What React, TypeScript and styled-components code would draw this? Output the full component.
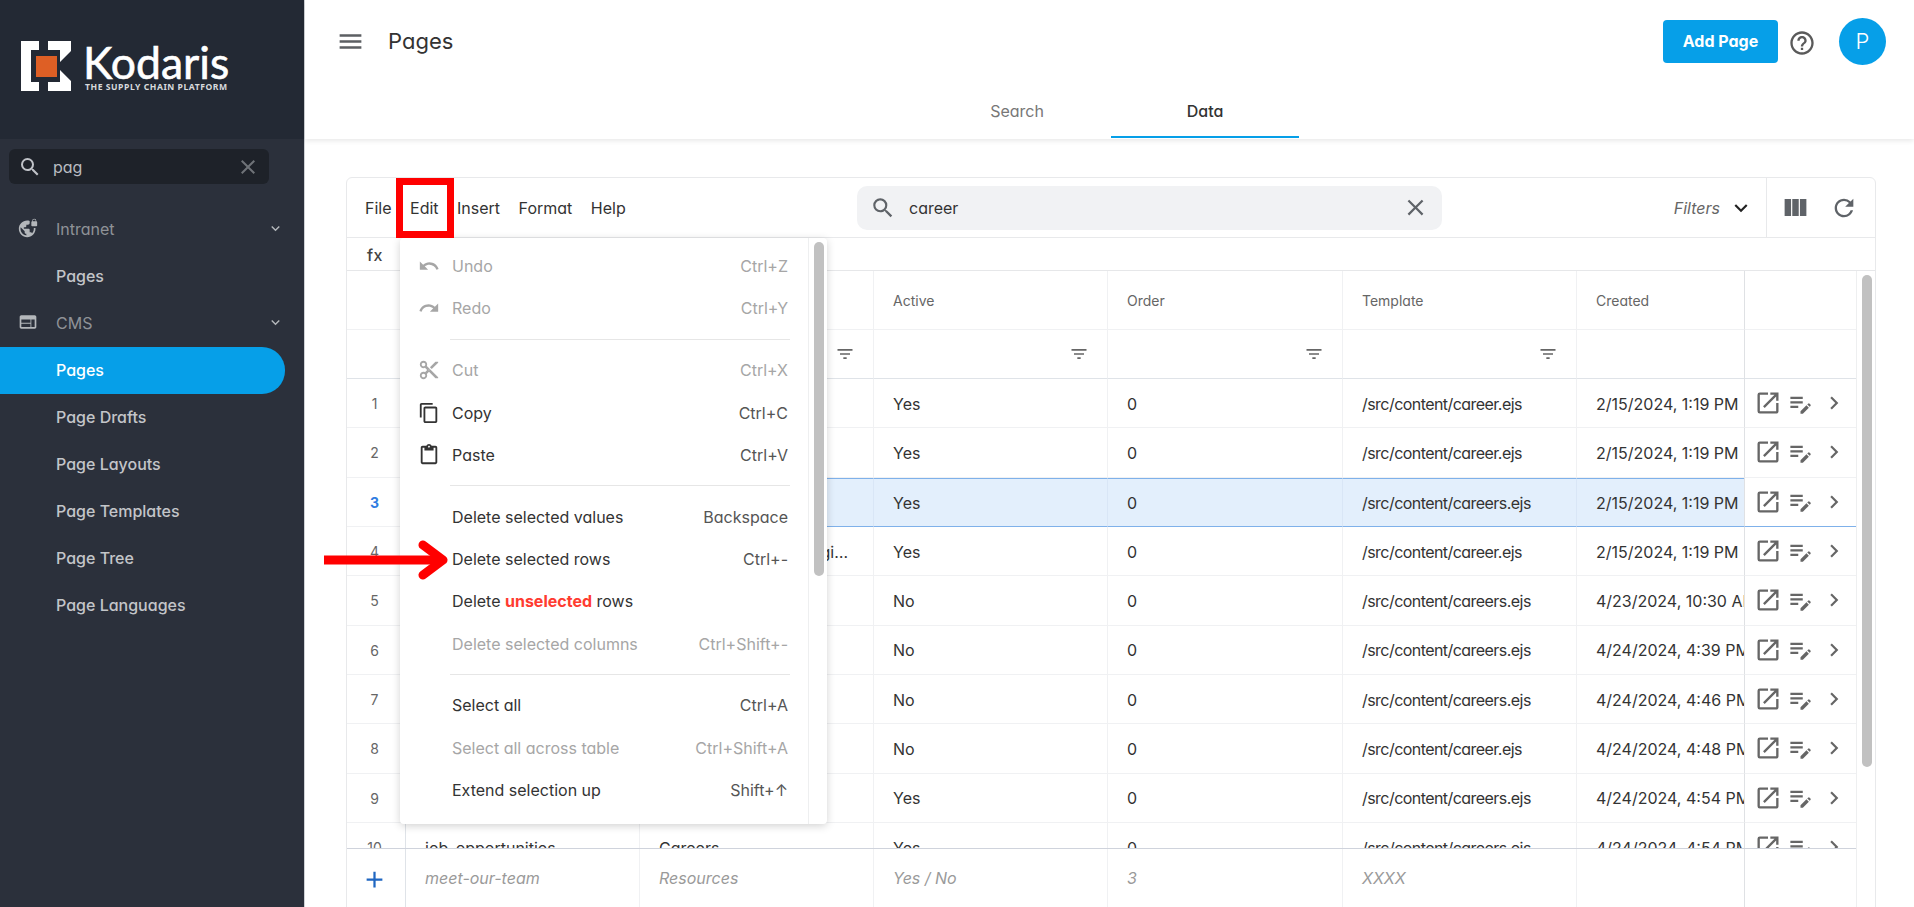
import React from "react";
import styled, { createGlobalStyle } from "styled-components";
import {
  MdSearch, MdClose, MdVpnLock, MdWeb, MdExpandMore, MdMenu, MdHelpOutline, MdViewColumn, MdRefresh,
  MdFilterList, MdOutlineOpenInNew, MdEditNote, MdChevronRight, MdAdd, MdUndo, MdRedo, MdContentCut,
  MdContentCopy, MdContentPaste,
} from "react-icons/md";

const Global = createGlobalStyle`
  html, body { margin: 0; padding: 0; height: 907px; overflow: hidden; background: #fff; }
  body { font-family: Inter, "Noto Sans", sans-serif; font-feature-settings: "cv11" 1; color: #333; }
  * { box-sizing: border-box; }
  #root { height: 907px; }
`;

const Shell = styled.div`display: flex; height: 907px; width: 1914px; overflow: hidden;`;
const Sidebar = styled.aside`
  width: 305px; flex: none; background: #2b303b; border-right: 1px solid #cfd2d6; height: 100%;
`;
const LogoBar = styled.div`
  height: 139px; background: #232934; padding: 41px 0 0 21px; display: flex; gap: 14px;
`;
const LogoWords = styled.div`display: flex; flex-direction: column; color: #fff; margin-top: 2px;`;
const LogoName = styled.span`
  font: 400 44.5px/38px Lato, sans-serif; font-feature-settings: normal; margin-left: -2px;
  -webkit-text-stroke: 0.6px #fff;
`;
const LogoTag = styled.span`
  font: 700 8.6px/11px "Noto Sans", sans-serif; letter-spacing: 0.55px; color: #d8dadd; white-space: nowrap;
  margin-top: 1px; font-feature-settings: normal;
`;
const SideSearch = styled.div`
  margin: 10px 35px 22px 9px; height: 35px; border-radius: 6px; background: #1e2229; display: flex;
  align-items: center; padding: 0 9px; color: #c0c3c8; gap: 11px; font-size: 16px;
`;
const SideSearchText = styled.span`flex: 1; color: #b9bcc1;`;
const SideClear = styled.span`display: flex; color: #6f7378;`;
const SideItem = styled.div<{ $active?: boolean; $group?: boolean }>`
  height: 47px; margin-right: 19px; display: flex; align-items: center; padding: 0 0 2px 56px; font-size: 16px;
  font-weight: ${(p) => (p.$group ? 400 : 500)};
  color: ${(p) => (p.$active ? "#fff" : p.$group ? "#8f9297" : "#c3c5c9")};
  background: ${(p) => (p.$active ? "#069fe8" : "transparent")};
  border-radius: ${(p) => (p.$active ? "0 23px 23px 0" : "0")};
  position: relative;
`;
const GroupIcon = styled.span`position: absolute; left: 18px; top: 12px; display: flex; color: #b4b7bb;`;
const GroupCaret = styled.span`position: absolute; right: 1px; top: 14px; display: flex; color: #b4b7bb;`;

const Main = styled.main`flex: 1; min-width: 0; display: flex; flex-direction: column;`;
const TopBar = styled.header`
  height: 139px; flex: none; background: #fff; box-shadow: 0 2px 5px rgba(0,0,0,.09); position: relative; z-index: 1;
`;
const TopRow = styled.div`height: 82px; display: flex; align-items: center; padding: 0 28px 0 31px;`;
const Burger = styled.span`display: flex; color: #5c5f63; margin-right: 23px;`;
const Title = styled.h1`flex: 1; margin: 0; font-size: 22px; font-weight: 400; color: #333;`;
const AddButton = styled.button`
  width: 115px; height: 43px; border: 0; border-radius: 4px; background: #069fe8; color: #fff; font: inherit;
  font-size: 16px; font-weight: 700; font-feature-settings: "cv11" 1;
`;
const HelpSlot = styled.span`width: 47px; display: flex; justify-content: center; margin: 4px 14px 0 0; color: #5a5a5a;`;
const Avatar = styled.span`
  width: 47px; height: 47px; border-radius: 50%; background: #069fe8; color: #fff; display: flex;
  align-items: center; justify-content: center; font-size: 22px; font-weight: 300;
`;
const TabRow = styled.nav`display: flex; justify-content: center; padding-left: 3px;`;
const Tab = styled.div<{ $on?: boolean }>`
  width: 188px; height: 56px; padding-top: 4px; display: flex; align-items: center; justify-content: center;
  font-size: 16px; font-weight: ${(p) => (p.$on ? 500 : 400)}; color: ${(p) => (p.$on ? "#333" : "#777")};
  border-bottom: 2px solid ${(p) => (p.$on ? "#069fe8" : "transparent")};
`;

const Content = styled.section`flex: 1; min-height: 0; padding: 38px 38px 0 41px; background: #fff;`;
const Card = styled.div`
  position: relative; height: 760px; border: 1px solid #e8e9eb; border-radius: 6px 6px 0 0; background: #fff;
`;
const Toolbar = styled.div`
  height: 60px; display: grid; grid-template-columns: 510px 585px 1fr 108px; align-items: center;
  border-bottom: 1px solid #e8e9eb;
`;
const MenuBar = styled.div`display: flex; gap: 18.5px; padding-left: 18px; font-size: 16px; color: #333;`;
const TableSearch = styled.div`
  height: 44px; border-radius: 10px; background: #f1f2f4; display: flex; align-items: center; padding: 0 13px;
  gap: 13px; color: #5f6368;
`;
const TableSearchText = styled.span`flex: 1; font-size: 16px; color: #333;`;
const Filters = styled.div`
  height: 100%; display: flex; align-items: center; justify-content: flex-end; gap: 8px; padding-right: 12px;
  border-right: 1px solid #e8e9eb; font-size: 16px; font-style: italic; color: #666;
`;
const FilterCaret = styled.span`display: flex; color: #222;`;
const ToolIcons = styled.div`display: flex; align-items: center; padding-left: 14px; gap: 20px; color: #5f6368;`;
const FxRow = styled.div`
  height: 33px; display: flex; align-items: center; padding: 1px 0 0 20px; border-bottom: 1px solid #e6e7e9;
  font-size: 16px; font-weight: 500; color: #444; letter-spacing: .5px;
`;
const TableWrap = styled.div`display: flex; height: 636px;`;
const Table = styled.div`width: 1509px; flex: none; display: flex; flex-direction: column;`;
const Row = styled.div<{ $h: string }>`
  height: ${(p) => p.$h}; flex: none; display: grid;
  grid-template-columns: 59px 234px 234px 234px 235px 234px 168px 111px;
`;
const Body = styled.div`height: 469px; flex: none; overflow: hidden;`;
const Cell = styled.div<{ $sel?: boolean; $line?: string }>`
  min-width: 0; display: flex; align-items: center; padding: 1px 0 0 19px; overflow: hidden; white-space: nowrap;
  font-size: 16px; color: #333; border-right: 1px solid #f0f1f3;
  border-bottom: 1px solid ${(p) => p.$line || "#f0f1f3"};
  ${(p) => p.$sel && "background:#e3effc;border-top:1px solid #7fb1ea;border-bottom:1px solid #7fb1ea;border-right-color:#d9e6f6;"}
`;
const TextCell = styled(Cell)`padding-right: 19px;`;
const PathCell = styled(Cell)`letter-spacing: -0.55px;`;
const Ellip = styled.span`overflow: hidden; text-overflow: ellipsis;`;
const NumCell = styled.div<{ $sel?: boolean; $line?: string }>`
  display: flex; align-items: center; justify-content: center; font-size: 14px; padding: 1px 3px 0 0;
  font-weight: ${(p) => (p.$sel ? 700 : 400)}; color: ${(p) => (p.$sel ? "#2f7de1" : "#666")};
  border-right: 1px solid #dfe3e8; border-bottom: 1px solid ${(p) => p.$line || "#f0f1f3"};
`;
const HeadCell = styled(Cell)`font-size: 14px; color: #666; padding-top: 0;`;
const FilterCell = styled(Cell)`justify-content: flex-end; padding: 0 18px 0 0; color: #666;`;
const ActionCell = styled.div<{ $sel?: boolean; $line?: string }>`
  display: flex; align-items: center; padding-left: 6px; color: #666; border-left: 1px solid #dfe1e4;
  margin-left: -1px; border-bottom: 1px solid ${(p) => (p.$sel ? "#7fb1ea" : p.$line || "#f0f1f3")};
`;
const ActionSlot = styled.span`width: 33px; display: flex; justify-content: center; flex: none;`;
const AddCell = styled(NumCell)`color: #1f66c1; border-bottom: 0; padding-top: 0;`;
const GhostCell = styled(Cell)`font-style: italic; color: #9a9a9a; border-bottom: 0; padding: 0 0 2px 19px;`;
const Divider = styled.div`height: 1px; background: #cfd3dc; flex: none;`;
const Track = styled.div`width: 19px; flex: none; border-left: 1px solid #eeeff0;`;
const Thumb = styled.div<{ $h: number; $t: number }>`
  width: 10px; height: ${(p) => p.$h}px; margin: ${(p) => p.$t}px 0 0 5px; border-radius: 5px; background: #c1c1c1;
`;

const Menu = styled.div`
  position: absolute; left: 53px; top: 60px; width: 427px; height: 586px; z-index: 3; background: #fff;
  border-radius: 4px; box-shadow: 0 2px 8px rgba(0,0,0,.18); display: flex; overflow: hidden;
`;
const MenuList = styled.div`flex: 1; padding-top: 7px; min-width: 0;`;
const MenuItem = styled.div<{ $off?: boolean }>`
  height: 42.3px; display: flex; align-items: center; padding: 0 20px 0 18px; font-size: 16px;
  color: ${(p) => (p.$off ? "#a6a6a6" : "#333")};
`;
const MenuIcon = styled.span`width: 34px; flex: none; display: flex;`;
const MenuLabel = styled.span`flex: 1; white-space: nowrap;`;
const Shortcut = styled.span<{ $off?: boolean }>`color: ${(p) => (p.$off ? "#a6a6a6" : "#555")}; white-space: nowrap;`;
const MenuSep = styled.div`height: 1px; margin: 9.25px 18px 9.25px 50px; background: #e6e6e6;`;
const Hot = styled.b`color: #ff3b30; font-weight: 700;`;
const RedBox = styled.div`
  position: absolute; left: 49px; top: 0; width: 58px; height: 60px; border: 7px solid #ff0000; z-index: 4;
`;
const ArrowMark = styled.svg`position: absolute; left: 324px; top: 538px; z-index: 5;`;

const rows = [
  ["careers", "Careers", "Yes", "/src/content/career.ejs", "2/15/2024, 1:19 PM"],
  ["careers-2", "Careers", "Yes", "/src/content/career.ejs", "2/15/2024, 1:19 PM"],
  ["careers-3", "Careers", "Yes", "/src/content/careers.ejs", "2/15/2024, 1:19 PM"],
  ["careers-4", "Careers: Software Engineering", "Yes", "/src/content/career.ejs", "2/15/2024, 1:19 PM"],
  ["careers-5", "Careers", "No", "/src/content/careers.ejs", "4/23/2024, 10:30 AM"],
  ["careers-6", "Careers", "No", "/src/content/careers.ejs", "4/24/2024, 4:39 PM"],
  ["careers-7", "Careers", "No", "/src/content/careers.ejs", "4/24/2024, 4:46 PM"],
  ["careers-8", "Careers", "No", "/src/content/career.ejs", "4/24/2024, 4:48 PM"],
  ["careers-9", "Careers", "Yes", "/src/content/careers.ejs", "4/24/2024, 4:54 PM"],
  ["job-opportunities", "Careers", "Yes", "/src/content/careers.ejs", "4/24/2024, 4:54 PM"],
];

const LogoMark = () => (
  <svg width="50" height="50" viewBox="0 0 50 50" style={{ flex: "none" }}>
    <path fill="#fff" d="M0 0H18V9H10V41H18V50H0Z" />
    <path fill="#fff" d="M27 0H50V10L39 21V9H27Z" />
    <path fill="#fff" d="M39 29L50 40V50H27V41H39Z" />
    <rect x="15" y="15" width="21" height="21" fill="#de5f25" />
  </svg>
);

const menu = [
  { l: "Undo", s: "Ctrl+Z", off: true, i: <MdUndo size={22} /> },
  { l: "Redo", s: "Ctrl+Y", off: true, i: <MdRedo size={22} /> },
  { sep: true },
  { l: "Cut", s: "Ctrl+X", off: true, i: <MdContentCut size={22} /> },
  { l: "Copy", s: "Ctrl+C", i: <MdContentCopy size={22} /> },
  { l: "Paste", s: "Ctrl+V", i: <MdContentPaste size={22} /> },
  { sep: true },
  { l: "Delete selected values", s: "Backspace" },
  { l: "Delete selected rows", s: "Ctrl+-" },
  { l: <>Delete <Hot>unselected</Hot> rows</>, s: "" },
  { l: "Delete selected columns", s: "Ctrl+Shift+-", off: true },
  { sep: true },
  { l: "Select all", s: "Ctrl+A" },
  { l: "Select all across table", s: "Ctrl+Shift+A", off: true },
  { l: "Extend selection up", s: "Shift+↑" },
];

export default function App() {
  return (
    <Shell>
      <Global />
      <Sidebar>
        <LogoBar>
          <LogoMark />
          <LogoWords>
            <LogoName>Kodaris</LogoName>
            <LogoTag>THE SUPPLY CHAIN PLATFORM</LogoTag>
          </LogoWords>
        </LogoBar>
        <SideSearch>
          <MdSearch size={24} />
          <SideSearchText>pag</SideSearchText>
          <SideClear><MdClose size={24} /></SideClear>
        </SideSearch>
        <SideItem $group><GroupIcon><MdVpnLock size={20} /></GroupIcon>Intranet<GroupCaret><MdExpandMore size={17} /></GroupCaret></SideItem>
        <SideItem>Pages</SideItem>
        <SideItem $group><GroupIcon><MdWeb size={20} /></GroupIcon>CMS<GroupCaret><MdExpandMore size={17} /></GroupCaret></SideItem>
        <SideItem $active>Pages</SideItem>
        <SideItem>Page Drafts</SideItem>
        <SideItem>Page Layouts</SideItem>
        <SideItem>Page Templates</SideItem>
        <SideItem>Page Tree</SideItem>
        <SideItem>Page Languages</SideItem>
      </Sidebar>
      <Main>
        <TopBar>
          <TopRow>
            <Burger><MdMenu size={29} /></Burger>
            <Title>Pages</Title>
            <AddButton>Add Page</AddButton>
            <HelpSlot><MdHelpOutline size={28} /></HelpSlot>
            <Avatar>P</Avatar>
          </TopRow>
          <TabRow>
            <Tab>Search</Tab>
            <Tab $on>Data</Tab>
          </TabRow>
        </TopBar>
        <Content>
          <Card>
            <Toolbar>
              <MenuBar>
                <span>File</span><span>Edit</span><span>Insert</span><span>Format</span><span>Help</span>
              </MenuBar>
              <TableSearch>
                <MdSearch size={26} />
                <TableSearchText>career</TableSearchText>
                <MdClose size={27} />
              </TableSearch>
              <Filters>Filters<FilterCaret><MdExpandMore size={26} /></FilterCaret></Filters>
              <ToolIcons><MdViewColumn size={29} /><MdRefresh size={28} /></ToolIcons>
            </Toolbar>
            <FxRow>fx</FxRow>
            <TableWrap>
              <Table>
                <Row $h="59px">
                  <NumCell />
                  <HeadCell>Name</HeadCell>
                  <HeadCell>Type</HeadCell>
                  <HeadCell>Active</HeadCell>
                  <HeadCell>Order</HeadCell>
                  <HeadCell>Template</HeadCell>
                  <HeadCell>Created</HeadCell>
                  <ActionCell />
                </Row>
                <Row $h="49px">
                  <NumCell $line="#dfe3e8" />
                  {[0, 1, 2, 3, 4].map((i) => (
                    <FilterCell key={i} $line="#dfe3e8"><MdFilterList size={20} /></FilterCell>
                  ))}
                  <Cell $line="#dfe3e8" />
                  <ActionCell $line="#dfe3e8" />
                </Row>
                <Body>
                  {rows.map((r, i) => {
                    const sel = i === 2;
                    return (
                      <Row $h="49.33px" key={i}>
                        <NumCell $sel={sel}>{i + 1}</NumCell>
                        <TextCell $sel={sel}><Ellip>{r[0]}</Ellip></TextCell>
                        <TextCell $sel={sel}><Ellip>{r[1]}</Ellip></TextCell>
                        <Cell $sel={sel}>{r[2]}</Cell>
                        <Cell $sel={sel}>0</Cell>
                        <PathCell $sel={sel}>{r[3]}</PathCell>
                        <Cell $sel={sel}>{r[4]}</Cell>
                        <ActionCell $sel={sel}>
                          <ActionSlot><MdOutlineOpenInNew size={28} /></ActionSlot>
                          <ActionSlot><MdEditNote size={27} /></ActionSlot>
                          <ActionSlot><MdChevronRight size={26} /></ActionSlot>
                        </ActionCell>
                      </Row>
                    );
                  })}
                </Body>
                <Divider />
                <Row $h="60px">
                  <AddCell><MdAdd size={27} /></AddCell>
                  <GhostCell>meet-our-team</GhostCell>
                  <GhostCell>Resources</GhostCell>
                  <GhostCell>Yes / No</GhostCell>
                  <GhostCell>3</GhostCell>
                  <GhostCell>XXXX</GhostCell>
                  <GhostCell />
                  <ActionCell />
                </Row>
              </Table>
              <Track><Thumb $h={492} $t={4} /></Track>
            </TableWrap>
            <Menu>
              <MenuList>
                {menu.map((m, i) =>
                  m.sep ? (
                    <MenuSep key={i} />
                  ) : (
                    <MenuItem key={i} $off={m.off}>
                      <MenuIcon>{m.i}</MenuIcon>
                      <MenuLabel>{m.l}</MenuLabel>
                      <Shortcut $off={m.off}>{m.s}</Shortcut>
                    </MenuItem>
                  )
                )}
              </MenuList>
              <Track><Thumb $h={334} $t={4} /></Track>
            </Menu>
            <RedBox />
          </Card>
        </Content>
      </Main>
      <ArrowMark width="124" height="44" viewBox="0 0 124 44">
        <path d="M0 22H118" stroke="#ff0000" strokeWidth="9" fill="none" />
        <path d="M99 7L119 22L99 37" stroke="#ff0000" strokeWidth="9" strokeLinecap="round" strokeLinejoin="round" fill="none" />
      </ArrowMark>
    </Shell>
  );
}
